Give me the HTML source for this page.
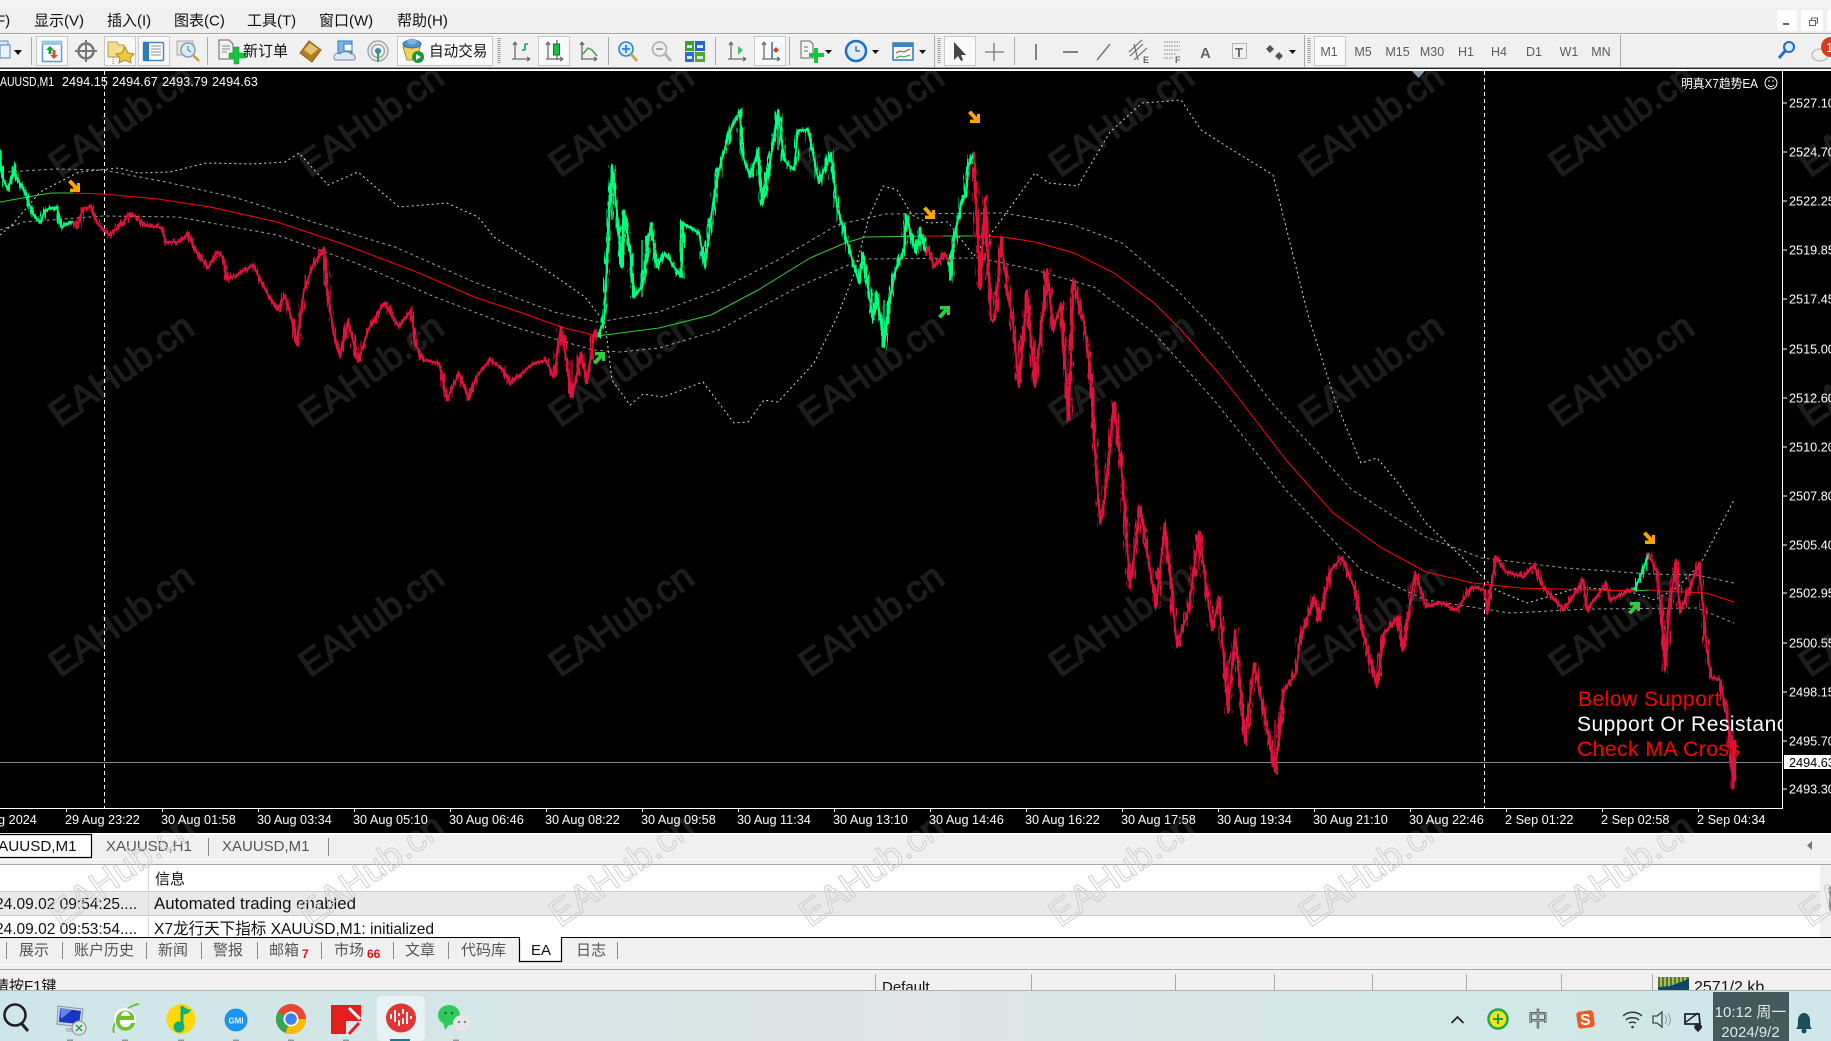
<!DOCTYPE html>
<html lang="zh"><head><meta charset="utf-8"><title>MT4</title>
<style>
html,body{margin:0;padding:0;background:#f0f0f0;overflow:hidden;width:1831px;height:1041px}
svg{display:block}
text{font-family:"Liberation Sans","Noto Sans CJK SC",sans-serif;white-space:pre}
.m{font-size:15px;fill:#111}
.ax{font-size:12.7px;fill:#fff}
.tb{font-size:15px;fill:#555}
.tf{font-size:12.5px;fill:#5c5c5c;text-anchor:middle}
.wd{font-size:37px;fill:#1d1d1d;stroke:#1d1d1d;stroke-width:1.4}
.wl{font-size:37px;fill:none;stroke:#cfcfcf;stroke-width:1}
</style></head><body>
<svg width="1831" height="1041" viewBox="0 0 1831 1041" xmlns="http://www.w3.org/2000/svg">
<defs>
<clipPath id="cc"><rect x="0" y="71" width="1831" height="762"/></clipPath>
<clipPath id="cp"><rect x="0" y="71" width="1782" height="737"/></clipPath>
<clipPath id="pn"><rect x="0" y="835" width="1831" height="102"/></clipPath>
<clipPath id="tb1"><rect x="0" y="865" width="1831" height="72"/></clipPath>
<clipPath id="st"><rect x="0" y="970" width="1831" height="20"/></clipPath>
<linearGradient id="tg" x1="0" x2="1" y1="0" y2="0"><stop offset="0" stop-color="#cfe6e8"/><stop offset=".25" stop-color="#d4e6e7"/><stop offset=".5" stop-color="#e0e4e4"/><stop offset=".75" stop-color="#d2e7e8"/><stop offset="1" stop-color="#cfe7e9"/></linearGradient>
<filter id="j" filterUnits="userSpaceOnUse" x="0" y="60" width="1831" height="780" color-interpolation-filters="sRGB">
<feTurbulence type="fractalNoise" baseFrequency="0.6 0.06" numOctaves="2" seed="4" result="n"/>
<feDisplacementMap in="SourceGraphic" in2="n" scale="11" xChannelSelector="A" yChannelSelector="G"/>
</filter>
<polygon id="ao" points="6,-3 6,6 -4,6 -4,2.5 0,2.5 -6,-4 -3,-6.5 3,0 3,-3"/>
<g id="price" fill="none" stroke-linejoin="round">
<polyline stroke="#00ff7f" points="0,150 2,177 8,190 15,165 16,177 22,187 28,200 32,213 40,223 45,210 57,207 61,227 73,222"/>
<polyline stroke="#dc143c" points="73,222 77,228 83,208 91,207 97,223 109,235 121,225 130,213 146,225 162,228 166,242 180,242 188,233 194,248 208,268 217,252 223,257 227,280 245,270 253,265 269,297 277,310 285,295 291,317 297,345 304,290 314,263 324,248 327,290 334,333 340,357 348,320 358,362 368,330 384,303 399,327 411,310 415,343 423,360 439,363 447,400 459,373 469,400 476,377 490,360 504,370 510,383 534,363 546,360 554,377 561,327 569,377 572,397 581,353 587,383 595,330 598,337"/>
<polyline stroke="#00ff7f" points="598,337 604,320 612,165 616,203 622,267 624,210 630,250 634,297 642,287 651,223 657,267 665,253 681,277 683,223 699,233 705,267 713,203 719,170 729,133 740,112 742,153 750,177 758,150 762,203 774,140 778,110 784,160 794,170 798,130 808,130 819,183 831,153 837,207 853,262 859,283 863,253 873,320 877,293 884,347 893,277 904,250 906,215 916,253 920,230 926,253"/>
<polyline stroke="#dc143c" points="926,253 928,247 934,267 944,253 950,262"/>
<polyline stroke="#00ff7f" points="950,262 950,280 954,240 962,200 966,193 968,167 974,152"/>
<polyline stroke="#dc143c" points="974,152 976,203 980,287 985,198 991,320 995,320 1001,238 1007,287 1013,323 1019,387 1027,290 1035,387 1047,270 1053,330 1061,303 1069,420 1073,280 1084,323 1090,367 1094,437 1100,523 1103,514 1114,403 1123,483 1130,587 1140,507 1147,550 1156,607 1165,523 1177,647 1189,607 1199,532 1212,630 1219,597 1228,713 1235,630 1245,743 1254,663 1263,707 1275,772 1284,690 1296,673 1300,640 1314,597 1319,620 1331,570 1342,557 1354,587 1363,633 1377,687 1384,633 1398,617 1403,650 1415,572 1426,607 1440,603 1457,610 1471,587 1485,590 1487,613 1496,557 1506,572 1524,577 1534,565 1543,587 1564,610 1583,580 1587,610 1606,583 1610,600 1631,590 1634,590"/>
<polyline stroke="#00ff7f" points="1634,590 1641,575 1649,553"/>
<polyline stroke="#dc143c" points="1649,553 1650,557 1657,573 1662,617 1665,670 1669,613 1676,560 1680,613 1699,563 1704,617 1706,640 1711,677 1720,680 1729,727 1733,788 1735,740"/>
</g>
</defs>

<!-- window background -->
<rect x="0" y="0" width="1831" height="1041" fill="#f0f0f0"/>
<rect x="0" y="0" width="1831" height="8" fill="#f6f3f4"/>

<!-- menu -->
<text class="m" x="-4" y="25.500">F)</text>
<text class="m" x="34" y="25.500">显示(V)</text>
<text class="m" x="107" y="25.500">插入(I)</text>
<text class="m" x="174" y="25.500">图表(C)</text>
<text class="m" x="247" y="25.500">工具(T)</text>
<text class="m" x="319" y="25.500">窗口(W)</text>
<text class="m" x="397" y="25.500">帮助(H)</text>
<g fill="#fff"><rect x="1777" y="10" width="20" height="21" rx="2"/><rect x="1801" y="10" width="22" height="21" rx="2"/><rect x="1827" y="10" width="6" height="21" rx="2"/></g>
<rect x="1783" y="23" width="6" height="2" fill="#666"/>
<g fill="none" stroke="#666"><rect x="1809.5" y="20.5" width="6" height="5"/><path d="M1811.5 20v-2h6v5h-2"/></g>

<!-- toolbar -->
<rect x="0" y="33" width="1831" height="1" fill="#a3a3a3"/>
<rect x="0" y="34" width="1831" height="1" fill="#fafafa"/>
<rect x="0" y="67" width="1831" height="1" fill="#9a9a9a"/>
<rect x="0" y="68" width="1831" height="1" fill="#222"/>
<rect x="0" y="69" width="1831" height="2" fill="#fff"/>

<g fill="#f9f9f9" stroke="#c9c9c9">
<rect x="36.5" y="36.5" width="31" height="29"/><rect x="104.5" y="36.5" width="31" height="29"/><rect x="138.5" y="36.5" width="31" height="29"/>
<rect x="397.5" y="36.5" width="95" height="29"/><rect x="538.5" y="36.5" width="31" height="29"/><rect x="754.5" y="36.5" width="31" height="29"/>
<rect x="944.5" y="36.5" width="31" height="29"/><rect x="1314.5" y="36.5" width="31" height="29"/>
</g>
<g fill="#aaa">
<rect x="31" y="37" width="1" height="28"/><rect x="207" y="37" width="1" height="28"/><rect x="608" y="37" width="1" height="28"/><rect x="715" y="37" width="1" height="28"/><rect x="789" y="37" width="1" height="28"/><rect x="1014" y="37" width="1" height="28"/><rect x="1620" y="35" width="1" height="32"/>
<rect x="934" y="35" width="1" height="32"/><rect x="1304" y="35" width="1" height="32"/>
</g>
<g stroke="#9a9a9a" stroke-dasharray="1 1" stroke-width="3" fill="none"><path d="M499 38v26M939 38v26M1309 38v26"/></g>

<!-- doc partial -->
<rect x="-6" y="41" width="14" height="17" fill="#d8e6f4" stroke="#5a8fc4"/><rect x="0" y="45" width="10" height="13" fill="#eaf2fa" stroke="#4f86bd"/>
<polygon points="14,50 22,50 18,55" fill="#111"/>
<!-- market watch -->
<rect x="42.5" y="41.5" width="19" height="20" fill="#fff" stroke="#5a9ad8" stroke-width="1.5"/><rect x="42" y="41" width="20" height="4" fill="#9cc5ea"/>
<polygon points="50,46 54,50 51.5,50 51.5,54 48.5,54 48.5,50 46,50" fill="#15a040"/><polygon points="54,59 50,55 52.5,55 52.5,50 55.5,50 55.5,55 58,55" fill="#e2492e"/>
<!-- target -->
<circle cx="86" cy="51" r="7.5" fill="none" stroke="#777" stroke-width="2.5"/><path d="M86 40v22M75 51h22" stroke="#777" stroke-width="2"/>
<!-- folder star -->
<path d="M108 42h9l2 3h5v12h-16z" fill="#f5dd8c" stroke="#b09a50"/><polygon points="125,47 128,53 134,54 130,58 131,63 125,60 119,63 120,58 116,54 122,53" fill="#efc93f" stroke="#a98a2e"/>
<path d="M113 57v7" stroke="#777" stroke-dasharray="1 1"/>
<!-- navigator -->
<rect x="143.5" y="42.5" width="20" height="18" rx="1" fill="#fff" stroke="#4b87c5" stroke-width="1.5"/><rect x="143" y="42" width="6" height="19" fill="#2f79bd"/><path d="M151 46h10M151 49h10M151 52h10M151 55h10" stroke="#8e8e8e"/>
<!-- magnifier clock -->
<rect x="177" y="41" width="16" height="14" fill="#e8e4dc" stroke="#aaa"/><circle cx="188" cy="50" r="7" fill="#dcebf7" stroke="#7da1c4" stroke-width="1.5"/><path d="M188 46v4l3 2" stroke="#3d79b4" fill="none"/><path d="M193 55l6 6" stroke="#c9a33c" stroke-width="2.5"/>
<!-- new order -->
<path d="M219 40h10l4 4v15h-14z" fill="#f2f2f2" stroke="#666"/><path d="M222 46h8M222 49h8M222 52h5" stroke="#888"/>
<path d="M229 53h5v-6h5v6h7v5h-7v6h-5v-6h-5z" fill="#19c23c" stroke="#0f8a2a" stroke-width=".5"/>
<text x="243" y="56" font-size="15" fill="#111">新订单</text>
<!-- gold -->
<polygon points="300,53 309,41 321,50 312,62" fill="#b27c1c" stroke="#8e6418"/><polygon points="304,50 310,43 318,49 311,55" fill="#e4c272"/>
<!-- person cloud -->
<rect x="338" y="41" width="14" height="12" fill="#7fb6e4" stroke="#2d77bd"/><rect x="344" y="44" width="8" height="7" fill="#fff" stroke="#2d77bd"/><path d="M335 60c-3-5 2-8 5-6 2-3 9-3 11 0 3-1 6 4 3 6z" fill="#dfe7f0" stroke="#7289a8"/>
<!-- radar -->
<circle cx="378" cy="51" r="10" fill="#eef1f3" stroke="#a3a9ae" stroke-width="1.5"/><circle cx="378" cy="51" r="6.5" fill="none" stroke="#9da6ad" stroke-width="1.5"/><circle cx="378" cy="51" r="3" fill="#3e7fb8"/><path d="M378 51v11" stroke="#2ba84a" stroke-width="2"/>
<!-- auto trading -->
<path d="M403 47l17 0-3 13h-10z" fill="#f0d35c" stroke="#a88e2a"/><ellipse cx="412" cy="44" rx="9" ry="4" fill="#4f93cf" stroke="#2f6fa6"/><ellipse cx="412" cy="41.5" rx="5" ry="3" fill="#7db5e0"/><circle cx="418" cy="57" r="6" fill="#149a3a"/><polygon points="416,54 416,60 421,57" fill="#fff"/>
<text x="429" y="56" font-size="14.6" fill="#111">自动交易</text>
<!-- chart type icons -->
<g fill="none" stroke="#6b6b6b" stroke-width="1.3">
<path d="M515 42v17M512 59h18M515 42l-2 3M515 42l2 3M530 59l-3-2M530 59l-3 2"/>
<path d="M548 42v17M546 59h17M548 42l-2 3M548 42l2 3M563 59l-3-2M563 59l-3 2"/>
<path d="M582 42v17M581 59h16M582 42l-2 3M582 42l2 3M597 59l-3-2M597 59l-3 2"/>
<path d="M731 42v17M728 59h18M731 42l-2 3M731 42l2 3M746 59l-3-2M746 59l-3 2"/>
<path d="M764 42v17M762 59h18M764 42l-2 3M764 42l2 3M780 59l-3-2M780 59l-3 2"/>
</g>
<path d="M525 50v-6M525 44h3M525 50h-3" stroke="#16a34a" fill="none" stroke-width="1.6"/>
<path d="M557 40v20" stroke="#444"/><rect x="553.5" y="44" width="6" height="11" fill="#19c23c" stroke="#0f7c2a"/>
<path d="M583 54l5-6 4 2 5 6" stroke="#4a9a58" stroke-width="1.5" fill="none"/>
<!-- zoom -->
<circle cx="626" cy="49" r="7" fill="#d9ecfa" stroke="#2f85d0" stroke-width="1.6"/><path d="M622 49h8M626 45v8" stroke="#2f85d0" stroke-width="1.8"/><path d="M631 54l6 7" stroke="#c9a33c" stroke-width="2.8"/>
<circle cx="659.5" cy="49" r="7" fill="#eee" stroke="#aab0b4" stroke-width="1.6"/><path d="M656 49h7" stroke="#a0a0a0" stroke-width="1.8"/><path d="M665 54l6 7" stroke="#b3b3b3" stroke-width="2.8"/>
<!-- tile -->
<rect x="685" y="41" width="9" height="10" fill="#3e9e2e"/><rect x="695" y="41" width="10" height="10" fill="#2a63c8"/><rect x="685" y="52" width="9" height="10" fill="#2a6cc8"/><rect x="695" y="52" width="10" height="10" fill="#4fa830"/>
<g fill="#d4e8f4"><rect x="687" y="45" width="5" height="3"/><rect x="697" y="45" width="6" height="3"/><rect x="687" y="56" width="5" height="3"/><rect x="697" y="56" width="6" height="3"/></g>
<polygon points="738,46 743,50 738,55" fill="#3fc66a"/>
<path d="M772 42v17" stroke="#2a6cb0" stroke-width="1.5"/><polygon points="776,47 779,50 776,53 773,50" fill="#e23b1a"/>
<!-- new indicator -->
<path d="M801 41h9l3 3v14h-12z" fill="#f4f4f4" stroke="#666"/><path d="M804 47h4M804 51h4" stroke="#666"/><path d="M809 53h5v-5h4v5h6v4h-6v6h-4v-6h-5z" fill="#18c23b"/>
<polygon points="825,50 832,50 828.5,54" fill="#111"/>
<!-- clock -->
<circle cx="856" cy="51" r="10" fill="#dcedf9" stroke="#1a6fc2" stroke-width="2.5"/><path d="M856 46v5h4" stroke="#333" fill="none"/><polygon points="872,50 879,50 875.5,54" fill="#111"/>
<!-- template -->
<rect x="893" y="43" width="20" height="17" fill="#f4f9fc" stroke="#3477b4" stroke-width="1.5"/><rect x="893" y="43" width="20" height="4" fill="#3a85c8"/><path d="M896 53l4-2 4 1 6-3" stroke="#c0392b" fill="none"/><path d="M896 58l4-2 4 1 6-2" stroke="#2ea043" fill="none"/><polygon points="919,50 926,50 922.5,54" fill="#111"/>
<!-- cursor -->
<polygon points="954,42 954,60 958,56 961,61 963,60 961,55 966,55" fill="#444"/>
<path d="M994 43v18M985 52h19" stroke="#777" stroke-width="1.3"/>
<path d="M1036 44v16" stroke="#666" stroke-width="1.6"/><path d="M1063 52h15" stroke="#666" stroke-width="1.6"/><path d="M1097 60l13-16" stroke="#777" stroke-width="1.5"/>
<!-- channels -->
<path d="M1130 56l13-12M1134 60l13-12M1129 52l13-12M1134 44l4 16" stroke="#666" stroke-width="1.1" fill="none"/><text x="1143" y="63" font-size="9" font-weight="bold" fill="#666">E</text>
<path d="M1164 42h16M1164 46h16M1164 50h16M1164 54h12M1164 58h10" stroke="#888" stroke-dasharray="1.5 1"/><text x="1175" y="63" font-size="9" font-weight="bold" fill="#666">F</text>
<text x="1200" y="58" font-size="15" font-weight="bold" fill="#666">A</text>
<rect x="1232.5" y="43.5" width="14" height="15" fill="none" stroke="#777" stroke-dasharray="1 1"/><text x="1235" y="57" font-size="13" font-weight="bold" fill="#666">T</text>
<!-- shapes -->
<polygon points="1270,45 1274,49 1270,53 1266,49" fill="#555"/><polygon points="1279,52 1283,56 1279,60 1275,56" fill="#555"/><polygon points="1289,50 1296,50 1292.5,54" fill="#111"/>
<!-- timeframes -->
<text class="tf" x="1329" y="56">M1</text><text class="tf" x="1363" y="56">M5</text><text class="tf" x="1397.5" y="56">M15</text><text class="tf" x="1432" y="56">M30</text><text class="tf" x="1466" y="56">H1</text><text class="tf" x="1499" y="56">H4</text><text class="tf" x="1534" y="56">D1</text><text class="tf" x="1569" y="56">W1</text><text class="tf" x="1601" y="56">MN</text>
<!-- search and chat -->
<circle cx="1789" cy="47" r="5" fill="#d8e9f8" stroke="#1f6fc0" stroke-width="2"/><path d="M1785 51l-6 7" stroke="#1f6fc0" stroke-width="3"/>
<ellipse cx="1820" cy="55" rx="8" ry="6" fill="#eee" stroke="#aaa"/>
<circle cx="1831" cy="47" r="10" fill="#d93a22"/><text x="1826" y="52" font-size="13" fill="#fff">1</text>

<!-- chart -->
<rect x="0" y="71" width="1831" height="762" fill="#000"/>
<g clip-path="url(#cc)">
<text class="wd" transform="translate(60 178) rotate(-35)">EAHub.cn</text><text class="wd" transform="translate(310 178) rotate(-35)">EAHub.cn</text><text class="wd" transform="translate(560 178) rotate(-35)">EAHub.cn</text><text class="wd" transform="translate(810 178) rotate(-35)">EAHub.cn</text><text class="wd" transform="translate(1060 178) rotate(-35)">EAHub.cn</text><text class="wd" transform="translate(1310 178) rotate(-35)">EAHub.cn</text><text class="wd" transform="translate(1560 178) rotate(-35)">EAHub.cn</text><text class="wd" transform="translate(1810 178) rotate(-35)">EAHub.cn</text>
<text class="wd" transform="translate(60 428) rotate(-35)">EAHub.cn</text><text class="wd" transform="translate(310 428) rotate(-35)">EAHub.cn</text><text class="wd" transform="translate(560 428) rotate(-35)">EAHub.cn</text><text class="wd" transform="translate(810 428) rotate(-35)">EAHub.cn</text><text class="wd" transform="translate(1060 428) rotate(-35)">EAHub.cn</text><text class="wd" transform="translate(1310 428) rotate(-35)">EAHub.cn</text><text class="wd" transform="translate(1560 428) rotate(-35)">EAHub.cn</text><text class="wd" transform="translate(1810 428) rotate(-35)">EAHub.cn</text>
<text class="wd" transform="translate(60 678) rotate(-35)">EAHub.cn</text><text class="wd" transform="translate(310 678) rotate(-35)">EAHub.cn</text><text class="wd" transform="translate(560 678) rotate(-35)">EAHub.cn</text><text class="wd" transform="translate(810 678) rotate(-35)">EAHub.cn</text><text class="wd" transform="translate(1060 678) rotate(-35)">EAHub.cn</text><text class="wd" transform="translate(1310 678) rotate(-35)">EAHub.cn</text><text class="wd" transform="translate(1560 678) rotate(-35)">EAHub.cn</text><text class="wd" transform="translate(1810 678) rotate(-35)">EAHub.cn</text>
<text class="wd" transform="translate(60 928) rotate(-35)">EAHub.cn</text><text class="wd" transform="translate(310 928) rotate(-35)">EAHub.cn</text><text class="wd" transform="translate(560 928) rotate(-35)">EAHub.cn</text><text class="wd" transform="translate(810 928) rotate(-35)">EAHub.cn</text><text class="wd" transform="translate(1060 928) rotate(-35)">EAHub.cn</text><text class="wd" transform="translate(1310 928) rotate(-35)">EAHub.cn</text><text class="wd" transform="translate(1560 928) rotate(-35)">EAHub.cn</text><text class="wd" transform="translate(1810 928) rotate(-35)">EAHub.cn</text>
</g>

<g clip-path="url(#cp)">
<!-- vertical period lines -->
<path d="M104.500 71V808M1484.500 71V808" stroke="#fff" stroke-dasharray="4 3" fill="none"/>
<!-- horizontal bid -->
<rect x="0" y="762" width="1782" height="1" fill="#7d8b99"/>
<!-- bands -->
<g fill="none" stroke="#9c9c9c" stroke-dasharray="3 3">
<polyline points="8,172 55,169 103,170 166,182 237,198 316,223 395,247 474,282 554,312 597,322 604,321 659,312 719,290 778,260 837,225 885,214 1003,213 1074,225 1122,243 1177,290 1220,335 1272,403 1352,490 1426,537 1482,558 1566,568 1650,574 1697,575 1734,583"/>
<polyline points="0,230 24,222 103,216 178,217 277,235 356,263 435,297 514,327 593,350 620,352 659,348 719,330 798,287 853,263 865,259 980,258 1035,270 1094,287 1154,333 1214,400 1286,490 1361,570 1426,600 1510,613 1590,609 1697,608 1734,623"/>
</g>
<polyline fill="none" stroke="#d8d8d8" stroke-dasharray="2 3" points="0,235 12,225 40,192 79,172 119,168 138,173 170,172 206,163 253,164 285,162 299,153 328,185 358,172 399,207 447,203 478,217 494,237 546,270 585,297 605,323 612,380 630,405 643,394 663,397 703,382 734,423 748,422 764,400 778,402 814,363 837,317 853,277 869,217 883,186 897,190 912,215 928,223 948,222 974,256 999,223 1035,173 1049,183 1078,186 1110,132 1142,103 1181,100 1201,130 1226,146 1273,175 1308,315 1335,400 1361,463 1377,458 1398,483 1426,523 1468,563 1496,590 1527,603 1561,593 1580,587 1631,592 1655,600 1678,587 1701,563 1734,500"/>
<!-- MA -->
<g fill="none" stroke-width="1" stroke-linejoin="round">
<polyline stroke="#32cd32" points="0,202 28,197 51,193 73,193"/>
<polyline stroke="#ff0000" points="73,193 103,194 158,199 210,207 277,222 340,243 419,273 474,297 522,313 561,327 597,336"/>
<polyline stroke="#32cd32" points="597,336 659,328 711,315 758,290 810,258 845,243 865,237 926,236"/>
<polyline stroke="#ff0000" points="926,236 943,236"/>
<polyline stroke="#32cd32" points="943,236 973,236"/>
<polyline stroke="#ff0000" points="973,236 1003,237 1035,242 1074,253 1114,273 1154,303 1181,330 1220,375 1240,400 1286,460 1333,513 1380,547 1426,572 1473,583 1520,588 1634,591"/>
<polyline stroke="#32cd32" points="1634,591 1649,590"/>
<polyline stroke="#ff0000" points="1649,590 1659,591 1706,593 1734,602"/>
</g>
<!-- price -->
<use href="#price" stroke-width="3" filter="url(#j)"/>
<use href="#price" stroke-width="1.8"/>
<!-- thin accents: long wicks -->
<g fill="none" stroke="#dc143c" stroke-width="1.2">
<path d="M1275 720V772M1665 620V672M1733 730V788M324 248V285M572 360V397M1094 390V437M1228 660V713M1019 340V387M1035 340V387M1199 532V570"/>
</g>
<g fill="none" stroke="#00ff7f" stroke-width="1.2"><path d="M612 165V220M778 110V150M884 300V347M642 240V297"/></g>
<!-- arrows -->
<g fill="#ffa500">
<use href="#ao" transform="translate(74 186)"/><use href="#ao" transform="translate(974 117)"/><use href="#ao" transform="translate(929 213)"/><use href="#ao" transform="translate(1649 538)"/>
</g>
<g fill="#2ecc40">
<use href="#ao" transform="translate(599 358) scale(1 -1)"/><use href="#ao" transform="translate(944 312) scale(1 -1)"/><use href="#ao" transform="translate(1634 608) scale(1 -1)"/>
</g>
<!-- labels -->
<text x="1578" y="706" font-size="21" letter-spacing=".5" fill="#ff0000">Below Support</text>
<text x="1577" y="731" font-size="21" letter-spacing=".5" fill="#fff">Support Or Resistance</text>
<text x="1577" y="756" font-size="21" letter-spacing=".5" fill="#ff0000">Check MA Cross</text>
</g>
<polygon points="1412,71 1425,71 1418.5,78" fill="#8899aa"/>
<text class="ax" x="0" y="86" textLength="54" lengthAdjust="spacingAndGlyphs">AUUSD,M1</text>
<text class="ax" x="62" y="86">2494.15</text><text class="ax" x="112" y="86">2494.67</text><text class="ax" x="162" y="86">2493.79</text><text class="ax" x="212" y="86">2494.63</text>
<text class="ax" x="1681" y="88" textLength="77" lengthAdjust="spacingAndGlyphs">明真X7趋势EA</text>
<circle cx="1771" cy="83" r="6" fill="none" stroke="#fff"/><circle cx="1769" cy="81" r=".8" fill="#fff"/><circle cx="1773" cy="81" r=".8" fill="#fff"/><path d="M1768 85c1.500 2 4.500 2 6 0" stroke="#fff" fill="none"/>

<!-- axes -->
<rect x="0" y="70" width="1783" height="1" fill="#fff"/>
<rect x="1782" y="70" width="1" height="739" fill="#fff"/>
<rect x="0" y="808" width="1783" height="1" fill="#fff"/>
<g stroke="#fff"><path d="M1783 103h4M1783 152h4M1783 201h4M1783 250h4M1783 299h4M1783 349h4M1783 398h4M1783 447h4M1783 496h4M1783 545h4M1783 593h4M1783 643h4M1783 692h4M1783 741h4M1783 789h4M66.500 809v3M162.500 809v3M258.500 809v3M354.500 809v3M450.500 809v3M546.500 809v3M642.500 809v3M738.500 809v3M834.500 809v3M930.500 809v3M1026.500 809v3M1122.500 809v3M1218.500 809v3M1314.500 809v3M1410.500 809v3M1506.500 809v3M1602.500 809v3M1698.500 809v3"/></g>
<g>
<text class="ax" x="1789" y="107.500">2527.10</text><text class="ax" x="1789" y="156.500">2524.70</text><text class="ax" x="1789" y="205.500">2522.25</text><text class="ax" x="1789" y="254.500">2519.85</text><text class="ax" x="1789" y="303.500">2517.45</text><text class="ax" x="1789" y="353.500">2515.00</text><text class="ax" x="1789" y="402.500">2512.60</text><text class="ax" x="1789" y="451.500">2510.20</text><text class="ax" x="1789" y="500.500">2507.80</text><text class="ax" x="1789" y="549.500">2505.40</text><text class="ax" x="1789" y="597.500">2502.95</text><text class="ax" x="1789" y="647.500">2500.55</text><text class="ax" x="1789" y="696.500">2498.15</text><text class="ax" x="1789" y="745.500">2495.70</text><text class="ax" x="1789" y="793.500">2493.30</text>
</g>
<rect x="1784" y="755" width="47" height="14" fill="#fff"/><text x="1789" y="767" font-size="12.7" fill="#000">2494.63</text>
<text class="ax" x="-9" y="824">ug 2024</text>
<text class="ax" x="65" y="824">29 Aug 23:22</text><text class="ax" x="161" y="824">30 Aug 01:58</text><text class="ax" x="257" y="824">30 Aug 03:34</text><text class="ax" x="353" y="824">30 Aug 05:10</text><text class="ax" x="449" y="824">30 Aug 06:46</text><text class="ax" x="545" y="824">30 Aug 08:22</text><text class="ax" x="641" y="824">30 Aug 09:58</text><text class="ax" x="737" y="824">30 Aug 11:34</text><text class="ax" x="833" y="824">30 Aug 13:10</text><text class="ax" x="929" y="824">30 Aug 14:46</text><text class="ax" x="1025" y="824">30 Aug 16:22</text><text class="ax" x="1121" y="824">30 Aug 17:58</text><text class="ax" x="1217" y="824">30 Aug 19:34</text><text class="ax" x="1313" y="824">30 Aug 21:10</text><text class="ax" x="1409" y="824">30 Aug 22:46</text><text class="ax" x="1505" y="824">2 Sep 01:22</text><text class="ax" x="1601" y="824">2 Sep 02:58</text><text class="ax" x="1697" y="824">2 Sep 04:34</text>

<!-- chart tabs -->
<rect x="0" y="833" width="1831" height="2" fill="#fff"/>
<rect x="0" y="835" width="1831" height="24" fill="#f0f0f0"/>
<rect x="0" y="859" width="1831" height="1" fill="#fff"/>
<rect x="0" y="864" width="1831" height="1" fill="#a8a8a8"/>
<rect x="0" y="834" width="92" height="24" fill="#fff"/>
<path d="M0 834.500H91.500V857.500H0" fill="none" stroke="#000" stroke-width="1.2"/>
<text x="-12" y="851" font-size="15.200" fill="#111">XAUUSD,M1</text>
<text class="tb" x="106" y="851" font-size="15.200">XAUUSD,H1</text>
<text class="tb" x="222" y="851" font-size="15.200">XAUUSD,M1</text>
<path d="M208.500 838V856M328.500 838V856" stroke="#888"/>
<polygon points="1812,841 1812,850 1807,845.500" fill="#777"/>

<!-- log table -->
<rect x="0" y="865" width="1820" height="72" fill="#fff"/>
<rect x="1820" y="865" width="11" height="72" fill="#f0f0f0"/>
<rect x="1829" y="886" width="2" height="25" fill="#888"/>
<rect x="0" y="892" width="1820" height="24" fill="#e9e9e9"/>
<rect x="0" y="891" width="1820" height="1" fill="#c8c8c8"/><rect x="0" y="915" width="1820" height="1" fill="#c8c8c8"/>
<rect x="148" y="865" width="1" height="72" fill="#d8d8d8"/>
<g clip-path="url(#tb1)">
<text x="155" y="884" font-size="15" fill="#111">信息</text>
<text x="-5" y="909" font-size="15.500" fill="#111">24.09.02 09:54:25....</text>
<text x="154" y="909" font-size="16.500" fill="#111" textLength="202" lengthAdjust="spacingAndGlyphs">Automated trading enabled</text>
<text x="-5" y="934" font-size="15.500" fill="#111">24.09.02 09:53:54....</text>
<text x="154" y="934" font-size="16" fill="#111" textLength="280" lengthAdjust="spacingAndGlyphs">X7龙行天下指标 XAUUSD,M1: initialized</text>
</g>
<rect x="0" y="937" width="1831" height="1" fill="#000"/>

<!-- bottom tabs -->
<path d="M519.500 937.500V961.500H561.500V937.500" fill="#fff" stroke="#000" stroke-width="1.2"/>
<rect x="520" y="936" width="41" height="3" fill="#fff"/>
<path d="M6.500 942V959M62.500 942V959M146.500 942V959M201.500 942V959M257.500 942V959M321.500 942V959M393.500 942V959M448.500 942V959M617.500 942V959" stroke="#888"/>
<text class="tb" x="19" y="955">展示</text><text class="tb" x="74" y="955">账户历史</text><text class="tb" x="158" y="955">新闻</text><text class="tb" x="213" y="955">警报</text><text class="tb" x="269" y="955">邮箱</text>
<text x="302" y="958" font-size="12" font-weight="bold" fill="#e0101a">7</text>
<text class="tb" x="334" y="955">市场</text>
<text x="367" y="958" font-size="12" font-weight="bold" fill="#e0101a">66</text>
<text class="tb" x="405" y="955">文章</text><text class="tb" x="461" y="955">代码库</text>
<text x="531" y="955" font-size="15" fill="#111">EA</text>
<text class="tb" x="576" y="955">日志</text>
<rect x="0" y="964" width="1831" height="1" fill="#fff"/>
<rect x="0" y="969" width="1831" height="1" fill="#a8a8a8"/>

<!-- watermark outlines over panels -->
<g clip-path="url(#pn)">
<text class="wl" transform="translate(60 928) rotate(-35)">EAHub.cn</text><text class="wl" transform="translate(310 928) rotate(-35)">EAHub.cn</text><text class="wl" transform="translate(560 928) rotate(-35)">EAHub.cn</text><text class="wl" transform="translate(810 928) rotate(-35)">EAHub.cn</text><text class="wl" transform="translate(1060 928) rotate(-35)">EAHub.cn</text><text class="wl" transform="translate(1310 928) rotate(-35)">EAHub.cn</text><text class="wl" transform="translate(1560 928) rotate(-35)">EAHub.cn</text><text class="wl" transform="translate(1810 928) rotate(-35)">EAHub.cn</text>
</g>

<!-- status bar -->
<g clip-path="url(#st)">
<text x="-6" y="991" font-size="15" fill="#111">请按F1键</text>
<text x="882" y="992" font-size="15" fill="#111">Default</text>
<text x="1694" y="992" font-size="16" fill="#111">2571/2 kb</text>
<path d="M875.500 974V990M1031.500 974V990M1175.500 974V990M1274.500 974V990M1372.500 974V990M1466.500 974V990M1561.500 974V990M1652.500 974V990" stroke="#aaa"/>
<g><rect x="1658" y="977" width="31" height="13" fill="#5e7a10"/><path d="M1661 977v13M1665 977v13M1669 977v13M1673 977v13M1677 977v13M1681 977v13M1685 977v13" stroke="#f0f0f0"/><polygon points="1658,990 1658,987 1670,986 1689,979 1689,990" fill="#0d4668"/></g>
</g>

<!-- taskbar -->
<rect x="0" y="990" width="1831" height="51" fill="url(#tg)"/>
<rect x="0" y="990" width="1831" height="1" fill="#a9b4b5"/>
<rect x="377" y="996" width="48" height="45" rx="4" fill="#e6f2f3"/>
<rect x="390" y="1039" width="20" height="2" fill="#157c8a"/>
<g fill="#8d9a9c"><rect x="67" y="1039.500" width="6" height="1.500"/><rect x="122" y="1039.500" width="6" height="1.500"/><rect x="178" y="1039.500" width="6" height="1.500"/><rect x="233" y="1039.500" width="6" height="1.500"/><rect x="288" y="1039.500" width="6" height="1.500"/><rect x="343" y="1039.500" width="6" height="1.500"/><rect x="453" y="1039.500" width="6" height="1.500"/></g>
<!-- search -->
<circle cx="15" cy="1015" r="10.500" fill="none" stroke="#222" stroke-width="2.600"/><path d="M22 1024l6 7" stroke="#222" stroke-width="3"/>
<!-- remote -->
<polygon points="58,1006 83,1009 81,1027 57,1024" fill="#d0d8e0" stroke="#8b97a6"/><polygon points="60,1008 81,1011 79,1024 59,1022" fill="#1637c0"/><polygon points="60,1008 72,1010 61,1019" fill="#5f86e8"/><rect x="66" y="1028" width="14" height="4" fill="#b9c0c6"/>
<circle cx="79" cy="1028" r="7" fill="#dfe5e6" stroke="#888"/><path d="M76 1031l6-6M76 1025l6 6" stroke="#1f9a40" stroke-width="1.400"/>
<!-- IE -->
<path d="M114 1033c-4-8 10-27 25-29" stroke="#6abd2a" stroke-width="1.800" fill="none"/>
<circle cx="125" cy="1019" r="11" fill="#fff"/>
<path d="M116 1019a9.500 9.500 0 0 1 18-3v4h-14a5.500 5.500 0 0 0 11 3h4a9.500 9.500 0 0 1-19-4zM121 1016h9a4.500 4.500 0 0 0-9 0z" fill="#6fc02a" fill-rule="evenodd"/>
<!-- QQ music -->
<ellipse cx="181" cy="1019" rx="14.500" ry="15" fill="#fbd80a"/><path d="M182 1006v21" stroke="#0fae7a" stroke-width="3"/><circle cx="179" cy="1027" r="5.500" fill="#0fae7a"/><path d="M183 1006c3 3 6 4 8 3-1 4-5 6-8 5z" fill="#0fae7a"/>
<!-- GMI -->
<circle cx="236" cy="1020" r="11.500" fill="#1b95ec"/><text x="236" y="1023.500" font-size="8" font-weight="bold" fill="#e8f6ff" text-anchor="middle">GMI</text>
<!-- chrome -->
<circle cx="291" cy="1019" r="15" fill="#e9462f"/><path d="M291 1019L278 1026.500A15 15 0 0 0 291 1034z" fill="#34a853"/><path d="M278 1011.500A15 15 0 0 0 282 1031L291 1019z" fill="#34a853"/><path d="M291 1019L306 1019A15 15 0 0 1 291 1034L285 1034z" fill="#fbbc05"/><circle cx="291" cy="1019" r="7.500" fill="#fff"/><circle cx="291" cy="1019" r="5.800" fill="#3f80f0"/>
<!-- red doc -->
<rect x="331" y="1005" width="30" height="29" fill="#e31e1e"/><path d="M349 1008l11 11" stroke="#fff" stroke-width="3"/><rect x="346" y="1021" width="17" height="15" fill="#d8e9ea"/><path d="M349 1034l10-11" stroke="#e31e1e" stroke-width="3"/>
<!-- red circle -->
<ellipse cx="401" cy="1018" rx="15" ry="14.500" fill="#e03636"/><g stroke="#fff" stroke-width="1.800" fill="none"><path d="M391 1014v5M395 1010v12M399 1013v3M399 1020v6M403 1009v5M403 1018v6M407 1012v12M411 1016v3"/></g>
<!-- wechat -->
<ellipse cx="449" cy="1015" rx="11" ry="10" fill="#2ecb5c"/><polygon points="443,1022 445,1030 450,1024" fill="#2ecb5c"/><circle cx="445.500" cy="1013" r="1.300" fill="#1c6a36"/><circle cx="452" cy="1013" r="1.300" fill="#1c6a36"/><ellipse cx="462" cy="1023" rx="9" ry="8" fill="#e6e6e6"/><circle cx="459" cy="1022" r="1.100" fill="#777"/><circle cx="465" cy="1022" r="1.100" fill="#777"/>
<!-- tray -->
<path d="M1451.500 1023l6-6 6 6" stroke="#222" stroke-width="1.700" fill="none"/>
<circle cx="1498" cy="1019" r="9.500" fill="#f4e21c" stroke="#21a84e" stroke-width="2.500"/><path d="M1498 1014v10M1493 1019h10" stroke="#1a9a45" stroke-width="2"/>
<text x="1528" y="1026" font-size="20" fill="none" stroke="#555" stroke-width=".9">中</text>
<rect x="1577" y="1011" width="17" height="17" rx="3" fill="#ee5a24" transform="rotate(-8 1585 1019)"/><text x="1580" y="1025" font-size="16" font-weight="bold" fill="#fff">S</text>
<g fill="none" stroke="#333" stroke-width="1.400"><path d="M1623 1016c5-5 14-5 19 0M1626 1020c3-3 10-3 13 0M1629 1023c2-1 5-1 7 0"/></g><circle cx="1632.500" cy="1027" r="1.300" fill="#333"/>
<path d="M1653 1016h4l5-4v15l-5-4h-4z" fill="none" stroke="#444" stroke-width="1.300"/><path d="M1665 1015c2 3 2 6 0 9M1668 1013c3 4 3 9 0 13" stroke="#999" fill="none"/>
<path d="M1685 1014h14l1 10h-15z" fill="none" stroke="#223" stroke-width="1.800"/><path d="M1686 1022l12-9" stroke="#223" stroke-width="1.500"/><path d="M1695 1025c2-2 5-1 4 0 3-1 4 2 2 4l-3 3-3-3c-1-1-1-3 0-4z" fill="#223"/>
<rect x="1713" y="992" width="76" height="49" fill="#44595b"/>
<text x="1750.500" y="1017" font-size="15" fill="#dfe8e8" text-anchor="middle">10:12 周一</text>
<text x="1750.500" y="1037" font-size="15" fill="#dfe8e8" text-anchor="middle">2024/9/2</text>
<path d="M1796 1029c2-2 2-4 2-9 0-4 3-7 6-7s6 3 6 7c0 5 0 7 2 9z" fill="#1c4f5c"/><circle cx="1804" cy="1031" r="2.500" fill="#1c4f5c"/>
</svg>
</body></html>
